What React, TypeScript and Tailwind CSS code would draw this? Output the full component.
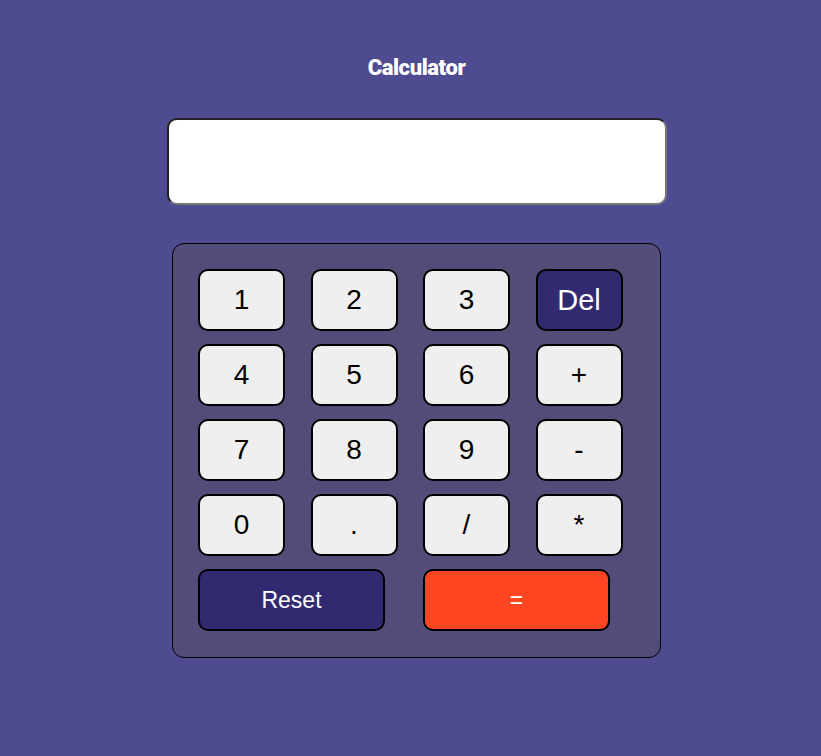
const KEYS = ['1', '2', '3', 'Del', '4', '5', '6', '+', '7', '8', '9', '-', '0', '.', '/', '*']

export default function App() {
  return (
    <div className="min-h-screen w-full bg-[#4f4b91] flex flex-col items-center pl-[12px] pt-[56px] font-['Liberation_Sans',Arial,sans-serif]">
      <h1 className="text-[22px] leading-[24px] font-black tracking-[-0.4px] text-white font-['Roboto',sans-serif]">
        Calculator
      </h1>

      {/* display */}
      <div className="mt-[38px] w-[500px] h-[87px] bg-white rounded-[10px] border-2 border-[#222] border-b-[#767676] border-r-[#767676]" />

      {/* keypad */}
      <div className="mt-[38px] w-[489px] bg-[#524c78] border border-black rounded-[12px] pl-[25px] pt-[25px] pb-[26px]">
        <div className="grid grid-cols-[repeat(4,87px)] gap-x-[25.5px] gap-y-[13px]">
          {KEYS.map(k => (
            <button
              key={k}
              className={`h-[62px] rounded-[10px] border-2 border-black text-[28px] leading-none ${
                k === 'Del' ? 'bg-[#312a70] text-white text-[29px]' : 'bg-[#efefef] text-black'
              }`}
            >
              {k}
            </button>
          ))}
        </div>
        <div className="flex gap-[38px] mt-[13px]">
          <button className="w-[187px] h-[62px] rounded-[10px] border-2 border-black bg-[#312a70] text-white text-[23px]">
            Reset
          </button>
          <button className="w-[187px] h-[62px] rounded-[10px] border-2 border-black bg-[#ff4522] text-white text-[23px]">
            =
          </button>
        </div>
      </div>
    </div>
  )
}
